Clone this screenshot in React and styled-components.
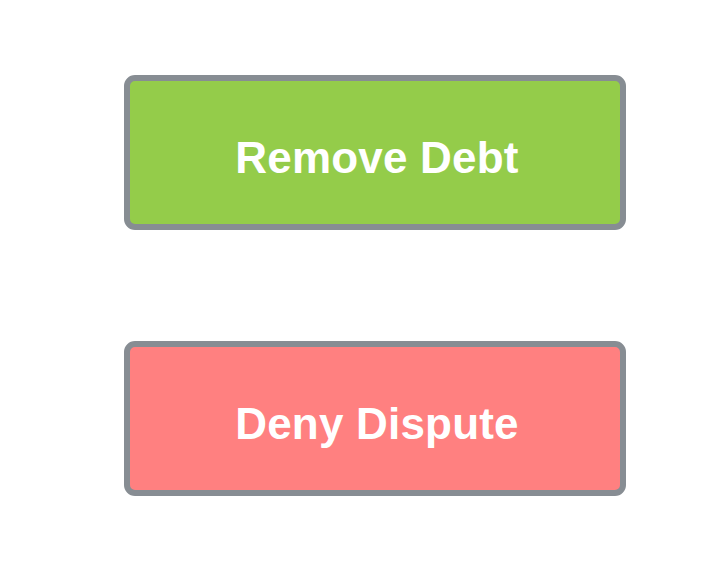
import React from "react";
import styled, { createGlobalStyle } from "styled-components";

const GlobalStyle = createGlobalStyle`
  body {
    margin: 0;
    background: #fff;
    font-family: "Liberation Sans", Arial, sans-serif;
  }
`;

const Page = styled.div`
  display: flex;
  flex-direction: column;
  gap: 111px;
  padding: 75px 0 0 124px;
`;

const ActionButton = styled.button`
  box-sizing: border-box;
  width: 502px;
  height: 155px;
  border: 6px solid #878d93;
  border-radius: 11px;
  background: ${(p) => p.$bg};
  color: #fff;
  font-family: "Liberation Sans", Arial, sans-serif;
  font-weight: bold;
  font-size: 44px;
  letter-spacing: 0.2px;
  padding: 10px 0 0 4px;
  cursor: pointer;
`;

const App = () => {
  return (
    <>
      <GlobalStyle />
      <Page>
        <ActionButton $bg="#94cc4a">Remove Debt</ActionButton>
        <ActionButton $bg="#ff8080">Deny Dispute</ActionButton>
      </Page>
    </>
  );
};

export default App;
